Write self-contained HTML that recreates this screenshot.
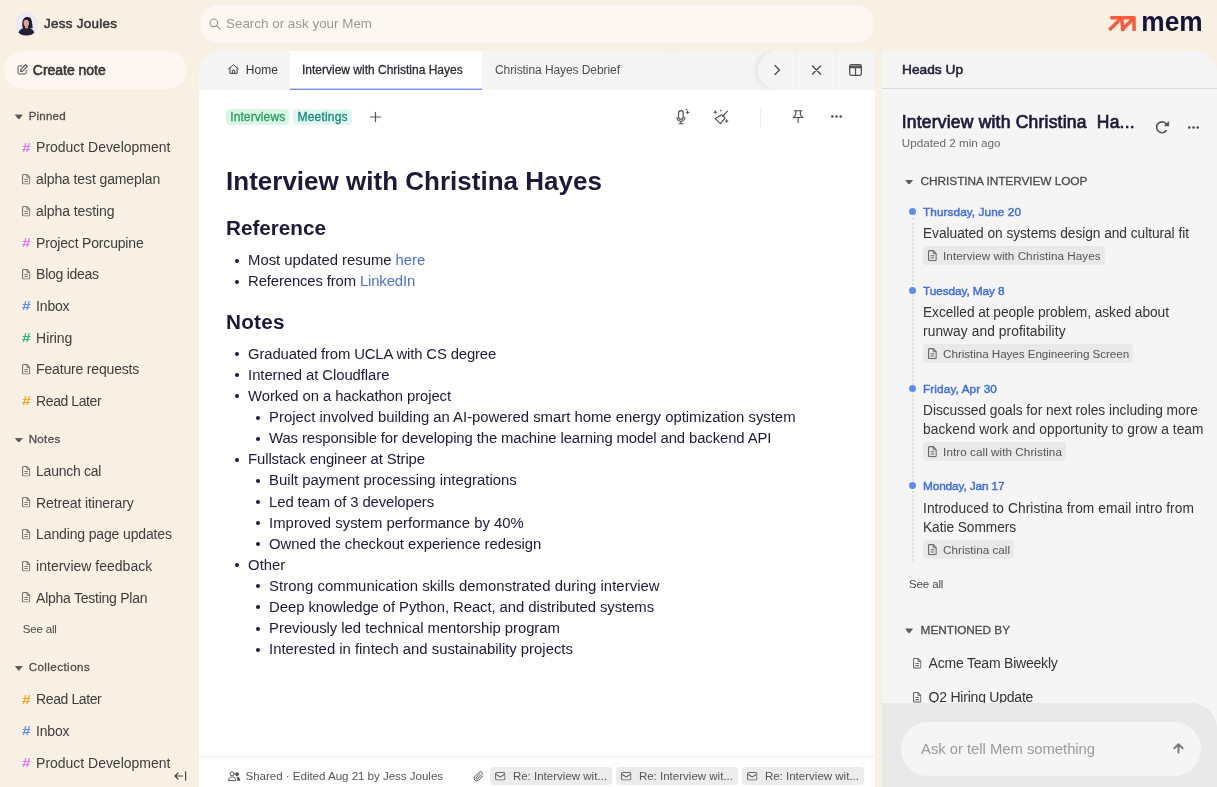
<!DOCTYPE html>
<html lang="en">
<head>
<meta charset="utf-8">
<title>Mem</title>
<style>
*{box-sizing:border-box;margin:0;padding:0}
html,body{width:1217px;height:787px;overflow:hidden}
body{background:#f9f0e4;font-family:"Liberation Sans",Arial,sans-serif;color:#3a3a3a;position:relative}
#app{position:absolute;left:0;top:0;width:1217px;height:787px;will-change:transform;opacity:.9999}
.abs,.t,.b{position:absolute}
.t{white-space:pre}
svg{display:block;overflow:visible;position:absolute}
.tri{position:absolute;width:7.6px;height:4.8px;background:#5c5c5c;clip-path:polygon(0 12%,6% 0,94% 0,100% 12%,56% 100%,44% 100%)}
.hash{position:absolute;font-size:12.5px;line-height:18px;font-weight:700;transform:scaleX(1.24);transform-origin:0 50%}
.pk{color:#dc7bf2}.bl{color:#5b8df0}.gr{color:#2fb58a}.or{color:#f6a623}
.med{-webkit-text-stroke:.28px currentColor}
.sb{-webkit-text-stroke:.55px currentColor}
.sb2{-webkit-text-stroke:.7px currentColor}
.sb3{-webkit-text-stroke:.45px currentColor}
.med2{-webkit-text-stroke:.28px currentColor}
.dot{position:absolute;width:7.4px;height:7.4px;border-radius:50%;background:#5b8df5}
.chip{position:absolute;border-radius:4px;background:#e9e9e9}
.bul{position:absolute;width:4px;height:4px;border-radius:50%;background:#1b1a38}
a{color:#4a72dc;text-decoration:none}
</style>
</head>
<body>
<div id="app">
<svg width="0" height="0" style="position:absolute"><defs>
<symbol id="doc" viewBox="0 0 9 11.500">
  <path d="M1.700.55h3.600L8.450 3.700v6.100a1.150 1.150 0 0 1-1.150 1.150H1.700A1.150 1.150 0 0 1 .55 9.800V1.700A1.150 1.150 0 0 1 1.700.55z" fill="none" stroke="currentColor" stroke-width="1.250"/>
  <path d="M2.600 5.900h3.800M2.600 8.200h3.800" stroke="currentColor" stroke-width="1.100" fill="none"/>
  <path d="M5.300.7v3h3" stroke="currentColor" stroke-width="1" fill="none"/>
</symbol>
<symbol id="env" viewBox="0 0 11 9"><rect x=".6" y=".6" width="9.800" height="7.800" rx="1.500" fill="none" stroke="currentColor" stroke-width="1.100"/><path d="M1 2.300l4.500 2.900L10 2.300" fill="none" stroke="currentColor" stroke-width="1.100" stroke-linejoin="round"/></symbol>
<symbol id="dots" viewBox="0 0 11 3"><circle cx="1.300" cy="1.500" r="1.250"/><circle cx="5.500" cy="1.500" r="1.250"/><circle cx="9.700" cy="1.500" r="1.250"/></symbol>
</defs></svg>
<!-- sidebar -->
<div class="abs" style="left:15px;top:12px;width:23px;height:23.500px;border-radius:50%;overflow:hidden;background:#ece9f3">
<svg width="23.500" height="24" viewBox="0 0 23.500 24"><rect width="23.500" height="24" fill="#ece9f3"/>
<path d="M7.900 16.200c-1-2.800-1-7.600 1.300-9.900 1.600-1.600 4.600-1.900 6.200-.2 1.700 1.900 1.900 6.500 2.300 10.200z" fill="#1f1c2b"/>
<ellipse cx="11.300" cy="11" rx="2.700" ry="3.600" fill="#dba39a" transform="rotate(-8 11.300 11)"/>
<path d="M8.400 10.300c.3-2 1.900-3.300 3.900-2.600 1.100.4 1.900 1.400 2.200 3.300.5-2.900-.6-5.300-3-5.500-2.300-.2-3.600 2-3.100 4.800z" fill="#1f1c2b"/>
<path d="M10.200 13.600h2.800l.3 3.200h-3.500z" fill="#d79c90"/>
<path d="M3 22.700c.2-3.600 2.300-5.900 6.400-6.900l1.900.7 2.700-.7c3.400.9 5.200 3 5.400 6.100-4 1.800-12 2-16.400.8z" fill="#252238"/>
</svg></div>
<div class="t sb" style="left:44px;top:16px;font-size:13.4px;line-height:16px;color:#383838;letter-spacing:0.303px;">Jess Joules</div>
<div class="abs" style="left:4px;top:51px;width:183px;height:38px;border-radius:19px;background:#fcf7f1"></div>
<svg style="left:17px;top:64px" width="11" height="11" viewBox="0 0 11 11" fill="none" stroke="#555" stroke-width="1" stroke-linecap="round" stroke-linejoin="round">
<path d="M4.800 1.900H2.100A1.100 1.100 0 0 0 1 3v5.900A1.100 1.100 0 0 0 2.100 10h5.900A1.100 1.100 0 0 0 9.100 8.900V6.300"/><path d="M8.600.7l1.700 1.700-4.700 4.700-2.100.4.400-2.100z" stroke-width="1.150"/></svg>
<div class="t sb" style="left:32.8px;top:62px;font-size:14px;line-height:16px;color:#333;letter-spacing:-0.027px;">Create note</div>
<i class="tri" style="left:15px;top:114.4px"></i><div class="t med2" style="left:28.7px;top:108.7px;font-size:11.6px;line-height:14px;color:#4c4c4c;letter-spacing:0.178px;">Pinned</div>
<b class="hash pk" style="left:22.200px;top:138.5px">#</b><div class="t" style="left:36.1px;top:138.4px;font-size:14px;line-height:18px;color:#3d3d3d;letter-spacing:-0.024px;">Product Development</div>
<svg style="left:22px;top:173.8px;color:#747474" width="8.300" height="10.500"><use href="#doc"/></svg><div class="t" style="left:36.1px;top:170.1px;font-size:14px;line-height:18px;color:#3d3d3d;letter-spacing:-0.111px;">alpha test gameplan</div>
<svg style="left:22px;top:205.5px;color:#747474" width="8.300" height="10.500"><use href="#doc"/></svg><div class="t" style="left:36.1px;top:201.79999999999998px;font-size:14px;line-height:18px;color:#3d3d3d;letter-spacing:-0.084px;">alpha testing</div>
<b class="hash pk" style="left:22.200px;top:233.8px">#</b><div class="t" style="left:36.1px;top:233.7px;font-size:14px;line-height:18px;color:#3d3d3d;letter-spacing:-0.182px;">Project Porcupine</div>
<svg style="left:22px;top:268.9px;color:#747474" width="8.300" height="10.500"><use href="#doc"/></svg><div class="t" style="left:36.1px;top:265.20000000000005px;font-size:14px;line-height:18px;color:#3d3d3d;letter-spacing:-0.266px;">Blog ideas</div>
<b class="hash bl" style="left:22.200px;top:297.1px">#</b><div class="t" style="left:36.1px;top:297.0px;font-size:14px;line-height:18px;color:#3d3d3d;letter-spacing:-0.188px;">Inbox</div>
<b class="hash gr" style="left:22.200px;top:328.8px">#</b><div class="t" style="left:36.1px;top:328.70000000000005px;font-size:14px;line-height:18px;color:#3d3d3d;letter-spacing:-0.056px;">Hiring</div>
<svg style="left:22px;top:364.0px;color:#747474" width="8.300" height="10.500"><use href="#doc"/></svg><div class="t" style="left:36.1px;top:360.3px;font-size:14px;line-height:18px;color:#3d3d3d;letter-spacing:-0.176px;">Feature requests</div>
<b class="hash or" style="left:22.200px;top:392.2px">#</b><div class="t" style="left:36.1px;top:392.1px;font-size:14px;line-height:18px;color:#3d3d3d;letter-spacing:-0.420px;">Read Later</div>
<i class="tri" style="left:15px;top:437.7px"></i><div class="t med2" style="left:28.7px;top:432.0px;font-size:11.6px;line-height:14px;color:#4c4c4c;letter-spacing:0.301px;">Notes</div>
<svg style="left:22px;top:465.8px;color:#747474" width="8.300" height="10.500"><use href="#doc"/></svg><div class="t" style="left:36.1px;top:462.1px;font-size:14px;line-height:18px;color:#3d3d3d;letter-spacing:-0.269px;">Launch cal</div>
<svg style="left:22px;top:497.4px;color:#747474" width="8.300" height="10.500"><use href="#doc"/></svg><div class="t" style="left:36.1px;top:493.70000000000005px;font-size:14px;line-height:18px;color:#3d3d3d;letter-spacing:-0.118px;">Retreat itinerary</div>
<svg style="left:22px;top:529.1px;color:#747474" width="8.300" height="10.500"><use href="#doc"/></svg><div class="t" style="left:36.1px;top:525.4px;font-size:14px;line-height:18px;color:#3d3d3d;letter-spacing:-0.141px;">Landing page updates</div>
<svg style="left:22px;top:560.8px;color:#747474" width="8.300" height="10.500"><use href="#doc"/></svg><div class="t" style="left:36.1px;top:557.1px;font-size:14px;line-height:18px;color:#3d3d3d;letter-spacing:0.009px;">interview feedback</div>
<svg style="left:22px;top:592.3px;color:#747474" width="8.300" height="10.500"><use href="#doc"/></svg><div class="t" style="left:36.1px;top:588.6px;font-size:14px;line-height:18px;color:#3d3d3d;letter-spacing:-0.254px;">Alpha Testing Plan</div>
<div class="t" style="left:22.8px;top:622px;font-size:11.5px;line-height:14px;color:#4a4a4a;letter-spacing:-0.179px;">See all</div>
<i class="tri" style="left:15px;top:665.8px"></i><div class="t med2" style="left:28.7px;top:660.1px;font-size:11.6px;line-height:14px;color:#4c4c4c;letter-spacing:0.428px;">Collections</div>
<b class="hash or" style="left:22.200px;top:690.5px">#</b><div class="t" style="left:36.1px;top:690.4px;font-size:14px;line-height:18px;color:#3d3d3d;letter-spacing:-0.409px;">Read Later</div>
<b class="hash bl" style="left:22.200px;top:722.2px">#</b><div class="t" style="left:36.1px;top:722.1px;font-size:14px;line-height:18px;color:#3d3d3d;letter-spacing:-0.213px;">Inbox</div>
<b class="hash pk" style="left:22.200px;top:753.8px">#</b><div class="t" style="left:36.1px;top:753.7px;font-size:14px;line-height:18px;color:#3d3d3d;letter-spacing:-0.024px;">Product Development</div>
<svg style="left:174px;top:771px" width="13" height="10" viewBox="0 0 13 10" fill="none" stroke="#444" stroke-width="1.200" stroke-linecap="round" stroke-linejoin="round"><path d="M1 5h7.600M4 2L1 5l3 3M11.600.8v8.400"/></svg>
<!-- search -->
<div class="abs" style="left:200px;top:5px;width:674px;height:38px;border-radius:19px;background:#fcf7f1"></div>
<svg style="left:209px;top:18px" width="12" height="12" viewBox="0 0 12 12" fill="none" stroke="#96928e" stroke-width="1.100" stroke-linecap="round"><circle cx="4.800" cy="4.800" r="3.800"/><path d="M7.700 7.700l3.300 3.300"/></svg>
<div class="t" style="left:226px;top:16px;font-size:13.4px;line-height:16px;color:#9c9893;letter-spacing:0.007px;">Search or ask your Mem</div>
<!-- center panel -->
<div class="abs" style="left:199px;top:51px;width:676px;height:736px;background:#fff;border-top-left-radius:22px;overflow:hidden">
  <div class="abs" style="left:0;top:0;width:676px;height:38px;background:#f5f5f5"></div>
  <div class="abs" style="left:0;top:38px;width:676px;height:1px;background:#f9f2e8"></div>
  <div class="abs" style="left:91px;top:0;width:192px;height:37px;background:#fff"></div>
  <div class="abs" style="left:91px;top:37px;width:192px;height:1px;background:#c3d1fa"></div>
  <div class="abs" style="left:91px;top:38px;width:192px;height:1px;background:#7393f2"></div>
  <div class="abs" style="left:472px;top:0;width:1px;height:38px;background:#f7f1ea"></div>
  <div class="abs" style="left:476px;top:0;width:1px;height:38px;background:#f6efe7"></div>
  <div class="abs" style="left:540px;top:0;width:136px;height:38px;overflow:hidden"><div class="abs" style="left:19px;top:0;width:117px;height:38px;background:#f5f5f5;border-radius:19px 0 0 19px;box-shadow:-3px 0 6px rgba(0,0,0,.08)"></div></div>
  <div class="abs" style="left:597px;top:0;width:1px;height:38px;background:#f4eee6"></div>
  <div class="abs" style="left:636px;top:0;width:1px;height:38px;background:#f4eee6"></div>
  <div class="abs" style="left:0;top:705px;width:676px;height:1px;background:#f8f0e6"></div>
</div>
<svg style="left:228.200px;top:63.800px" width="11" height="10.200" viewBox="0 0 11 10" fill="none" stroke="#444" stroke-width="1" stroke-linejoin="round" stroke-linecap="round"><path d="M.7 4.700L5.500.7l4.800 4M1.900 4v5.300h7.200V4"/><path d="M4.300 9.200V6.200h2.400v3"/></svg>
<div class="t" style="left:245.8px;top:62px;font-size:12px;line-height:16px;color:#333;letter-spacing:0.061px;">Home</div>
<div class="t med" style="left:302px;top:62px;font-size:12px;line-height:16px;color:#2b2b33;letter-spacing:-0.001px;">Interview with Christina Hayes</div>
<div class="t" style="left:495px;top:62px;font-size:12px;line-height:16px;color:#4e4e4e;letter-spacing:-0.078px;">Christina Hayes Debrief</div>
<svg style="left:0;top:0" width="1217" height="787" viewBox="0 0 1217 787" fill="none" stroke="#484848" stroke-width="1.250" stroke-linecap="round" stroke-linejoin="round"><path d="M775 65.500l4.400 4.500-4.400 4.500"/><path d="M812.500 66l8 8M820.500 66l-8 8"/></svg>
<svg style="left:849px;top:64px" width="13" height="12" viewBox="0 0 13 12" fill="none" stroke="#505050" stroke-width="1.300" stroke-linejoin="round"><rect x=".7" y=".7" width="11.600" height="10.600" rx="1.500"/><path d="M.7 2.200h11.600v1.500H.7z" fill="#505050"/><path d="M6.500 3.600v7.700"/></svg>
<div class="abs" style="left:226px;top:109.300px;width:63px;height:15.400px;border-radius:4px;background:#daf7e6"></div>
<div class="abs" style="left:293px;top:109.300px;width:58.500px;height:15.400px;border-radius:4px;background:#e0f7f3"></div>
<div class="t med" style="left:230.2px;top:109px;font-size:12px;line-height:16px;color:#229d59;letter-spacing:0.108px;">Interviews</div>
<div class="t med" style="left:297.5px;top:109px;font-size:12px;line-height:16px;color:#148a78;letter-spacing:0.185px;">Meetings</div>
<svg style="left:369.500px;top:111.500px" width="11" height="10" viewBox="0 0 11 10" stroke="#555" stroke-width="1.200" stroke-linecap="round"><path d="M5.500.4v9.200M.5 5h10"/></svg>
<svg style="left:0;top:0" width="1217" height="787" viewBox="0 0 1217 787" fill="none" stroke="#484848" stroke-width="1.100" stroke-linecap="round" stroke-linejoin="round">
  <!-- mic -->
  <rect x="678.600" y="110.600" width="4.600" height="8.600" rx="2.300"/>
  <path d="M676.900 117.300a4 4 0 0 0 8 0M680.900 121.400v2.300M678.900 123.800h4"/>
  <path d="M687.600 110l.6 1.700 1.700.6-1.700.6-.6 1.700-.6-1.700-1.700-.6 1.700-.6z" fill="#484848" stroke="none"/>
  <path d="M686.300 108.300l.35.9.9.35-.9.35-.35.9-.35-.9-.9-.35.9-.35z" fill="#484848" stroke="none"/>
  <!-- broom -->
  <path d="M727.500 111.200l-4.300 4.700"/>
  <path d="M721.800 114.800l3.400 3-4.800 5.900-5.300-5.300z"/>
  <circle cx="723.300" cy="116" r="1.100" fill="#484848" stroke="none"/>
  <path d="M715.300 109.900l.6 1.700 1.700.6-1.700.6-.6 1.700-.6-1.700-1.700-.6 1.700-.6z" fill="#484848" stroke="none"/>
  <path d="M720.900 109.200l.4 1 1 .4-1 .4-.4 1-.4-1-1-.4 1-.4z" fill="#484848" stroke="none"/>
  <path d="M726.700 118.900l.6 1.600 1.600.6-1.600.6-.6 1.600-.6-1.600-1.600-.6 1.600-.6z" fill="#484848" stroke="none"/>
  <!-- pin -->
  <path d="M794.300 110.700h7.600M795.800 110.700v4.100l-2.500 2.700h9.600l-2.500-2.700v-4.100M798.100 117.600v4.900"/>
</svg>
<div class="abs" style="left:760px;top:107px;width:1px;height:20px;background:#ececec"></div>
<svg style="left:830.800px;top:114.900px" width="11" height="3" fill="#484848"><use href="#dots"/></svg>
<div class="t" style="left:226px;top:164px;font-size:26px;line-height:34px;font-weight:700;color:#1b1a38;letter-spacing:0.011px;">Interview with Christina Hayes</div>
<div class="t" style="left:226px;top:214.5px;font-size:20.7px;line-height:26px;font-weight:700;color:#1b1a38;letter-spacing:-0.006px;">Reference</div>
<div class="t" style="left:226px;top:308.5px;font-size:20.7px;line-height:26px;font-weight:700;color:#1b1a38;letter-spacing:0.254px;">Notes</div>
<i class="bul" style="left:235.1px;top:258.5px"></i><div class="t" style="left:248.1px;top:250.1px;font-size:14.86px;line-height:21px;color:#1b1a38;letter-spacing:-0.017px;">Most updated resume <a>here</a></div>
<i class="bul" style="left:235.1px;top:279.5px"></i><div class="t" style="left:248.1px;top:271.09999999999997px;font-size:14.86px;line-height:21px;color:#1b1a38;letter-spacing:-0.133px;">References from <a>LinkedIn</a></div>
<i class="bul" style="left:235.1px;top:352.2px"></i><div class="t" style="left:248.1px;top:343.79999999999995px;font-size:14.86px;line-height:21px;color:#1b1a38;letter-spacing:-0.140px;">Graduated from UCLA with CS degree</div>
<i class="bul" style="left:235.1px;top:373.3px"></i><div class="t" style="left:248.1px;top:364.9px;font-size:14.86px;line-height:21px;color:#1b1a38;letter-spacing:-0.076px;">Interned at Cloudflare</div>
<i class="bul" style="left:235.1px;top:394.4px"></i><div class="t" style="left:248.1px;top:385.99999999999994px;font-size:14.86px;line-height:21px;color:#1b1a38;letter-spacing:-0.086px;">Worked on a hackathon project</div>
<i class="bul" style="left:256.1px;top:415.5px"></i><div class="t" style="left:269.1px;top:407.09999999999997px;font-size:14.86px;line-height:21px;color:#1b1a38;letter-spacing:-0.007px;">Project involved building an AI-powered smart home energy optimization system</div>
<i class="bul" style="left:256.1px;top:436.6px"></i><div class="t" style="left:269.1px;top:428.19999999999993px;font-size:14.86px;line-height:21px;color:#1b1a38;letter-spacing:-0.106px;">Was responsible for developing the machine learning model and backend API</div>
<i class="bul" style="left:235.1px;top:457.7px"></i><div class="t" style="left:248.1px;top:449.29999999999995px;font-size:14.86px;line-height:21px;color:#1b1a38;letter-spacing:-0.117px;">Fullstack engineer at Stripe</div>
<i class="bul" style="left:256.1px;top:478.8px"></i><div class="t" style="left:269.1px;top:470.4px;font-size:14.86px;line-height:21px;color:#1b1a38;letter-spacing:0.020px;">Built payment processing integrations</div>
<i class="bul" style="left:256.1px;top:499.9px"></i><div class="t" style="left:269.1px;top:491.5px;font-size:14.86px;line-height:21px;color:#1b1a38;letter-spacing:-0.118px;">Led team of 3 developers</div>
<i class="bul" style="left:256.1px;top:521.0px"></i><div class="t" style="left:269.1px;top:512.6px;font-size:14.86px;line-height:21px;color:#1b1a38;letter-spacing:0.010px;">Improved system performance by 40%</div>
<i class="bul" style="left:256.1px;top:542.1px"></i><div class="t" style="left:269.1px;top:533.6999999999999px;font-size:14.86px;line-height:21px;color:#1b1a38;letter-spacing:-0.033px;">Owned the checkout experience redesign</div>
<i class="bul" style="left:235.1px;top:563.2px"></i><div class="t" style="left:248.1px;top:554.8px;font-size:14.86px;line-height:21px;color:#1b1a38;letter-spacing:-0.018px;">Other</div>
<i class="bul" style="left:256.1px;top:584.3px"></i><div class="t" style="left:269.1px;top:575.9px;font-size:14.86px;line-height:21px;color:#1b1a38;letter-spacing:0.056px;">Strong communication skills demonstrated during interview</div>
<i class="bul" style="left:256.1px;top:605.4px"></i><div class="t" style="left:269.1px;top:597.0px;font-size:14.86px;line-height:21px;color:#1b1a38;letter-spacing:-0.074px;">Deep knowledge of Python, React, and distributed systems</div>
<i class="bul" style="left:256.1px;top:626.5px"></i><div class="t" style="left:269.1px;top:618.1px;font-size:14.86px;line-height:21px;color:#1b1a38;letter-spacing:-0.038px;">Previously led technical mentorship program</div>
<i class="bul" style="left:256.1px;top:647.6px"></i><div class="t" style="left:269.1px;top:639.1999999999999px;font-size:14.86px;line-height:21px;color:#1b1a38;letter-spacing:-0.004px;">Interested in fintech and sustainability projects</div>
<svg style="left:228px;top:770.800px" width="12.300" height="9.800" viewBox="0 0 12.500 10" fill="none" stroke="#555" stroke-width="1" stroke-linecap="round" stroke-linejoin="round"><circle cx="4.200" cy="2.800" r="2"/><path d="M.6 9.400c0-2.200 1.500-3.300 3.600-3.300s3.600 1.100 3.600 3.300z"/><circle cx="9.200" cy="3.300" r="1.500" fill="#555"/><path d="M9 6.300c1.900 0 3 1 3 3.100H9.600" fill="#555"/></svg>
<div class="t" style="left:245.5px;top:768.6px;font-size:11.6px;line-height:14px;color:#555;letter-spacing:-0.043px;">Shared · Edited Aug 21 by Jess Joules</div>
<svg style="left:473.300px;top:770.500px" width="11" height="11" viewBox="0 0 11 11" fill="none" stroke="#555" stroke-width="1" stroke-linecap="round" stroke-linejoin="round"><path d="M9.800 5L5.600 9.200a2.600 2.600 0 0 1-3.700-3.700l4.400-4.400a1.750 1.750 0 0 1 2.500 2.500L4.500 7.900a.9.900 0 0 1-1.300-1.300l3.900-3.900"/></svg>
<div class="chip" style="left:490px;top:766.500px;width:121.500px;height:18.500px;background:#ececec"></div><svg style="left:495px;top:771.500px;color:#6a6a6a" width="10.500" height="8.600"><use href="#env"/></svg><div class="t" style="left:512.9px;top:769px;font-size:11.5px;line-height:14px;color:#555;letter-spacing:0.008px;">Re: Interview wit...</div>
<div class="chip" style="left:616px;top:766.500px;width:121.500px;height:18.500px;background:#ececec"></div><svg style="left:621px;top:771.500px;color:#6a6a6a" width="10.500" height="8.600"><use href="#env"/></svg><div class="t" style="left:638.9px;top:769px;font-size:11.5px;line-height:14px;color:#555;letter-spacing:0.008px;">Re: Interview wit...</div>
<div class="chip" style="left:742px;top:766.500px;width:121.500px;height:18.500px;background:#ececec"></div><svg style="left:747px;top:771.500px;color:#6a6a6a" width="10.500" height="8.600"><use href="#env"/></svg><div class="t" style="left:764.9px;top:769px;font-size:11.5px;line-height:14px;color:#555;letter-spacing:0.008px;">Re: Interview wit...</div>
<svg style="left:1100px;top:8px" width="110" height="32" viewBox="1100 8 110 32">
  <g fill="none" stroke="#fb5a3c" stroke-width="3.500" stroke-linejoin="round" stroke-linecap="butt">
    <path d="M1110.300 17.700h11.300l1.300 13.400"/><path d="M1121.200 18.200l-11.800 11.700"/>
    <path d="M1123 17.700h11l.1 13.400"/><path d="M1133.600 18.200l-11.800 11.700"/>
  </g>
  <text x="1141.300" y="31.100" font-family="Liberation Sans, Arial, sans-serif" font-weight="700" font-size="27" fill="#15143a" textLength="61.300" lengthAdjust="spacingAndGlyphs">mem</text>
</svg>
<!-- right -->
<div class="abs" style="left:882px;top:50.700px;width:335px;height:737px;background:#f5f5f5;border-top-right-radius:22px;overflow:hidden">
  <div class="abs" style="left:0;top:37.800px;width:335px;height:1px;background:#dcdcdc"></div>
  <div class="abs" style="left:0;top:652.300px;width:335px;height:90px;background:#e9e9e9;border-top-right-radius:26px"></div>
  <div class="abs" style="left:18.900px;top:671.600px;width:299.400px;height:53.500px;border-radius:27px;background:#f5f5f5"></div>
</div>
<div class="t sb" style="left:902px;top:62px;font-size:13.7px;line-height:16px;color:#222136;letter-spacing:0.018px;">Heads Up</div>
<div class="t sb2" style="left:901.7px;top:111.2px;font-size:17.5px;line-height:22px;color:#1b1a38;letter-spacing:0.210px;">Interview with Christina  Ha...</div>
<svg style="left:0;top:0" width="1217" height="787" viewBox="0 0 1217 787"><path d="M1166.500 124.200A5.400 5.400 0 1 0 1166.400 130.500" fill="none" stroke="#4f4f4f" stroke-width="1.550" stroke-linecap="round"/><path d="M1168.800 121.600v4.500l-4.500-.3z" fill="#4f4f4f" stroke="#4f4f4f" stroke-width=".5" stroke-linejoin="round"/></svg>
<svg style="left:1188px;top:125.700px" width="11" height="3" fill="#444"><use href="#dots"/></svg>
<div class="t" style="left:901.7px;top:136px;font-size:11.7px;line-height:14px;color:#6a6a6a;letter-spacing:0.002px;">Updated 2 min ago</div>
<i class="tri" style="left:905.300px;top:179.7px"></i><div class="t med" style="left:920.6px;top:174.3px;font-size:11.83px;line-height:14px;color:#4a4a4a;letter-spacing:-0.054px;">CHRISTINA INTERVIEW LOOP</div>
<div class="abs" style="left:912px;top:218px;width:0;height:343px;border-left:2px dotted #e0e0e0"></div>
<i class="dot" style="left:909.100px;top:207.9px"></i><div class="t sb3" style="left:923px;top:204.79999999999998px;font-size:11.8px;line-height:14px;color:#3f6fe0;letter-spacing:0.072px;">Thursday, June 20</div>
<div class="t" style="left:923px;top:223.9px;font-size:13.74px;line-height:19px;color:#333;letter-spacing:-0.046px;">Evaluated on systems design and cultural fit</div>
<div class="chip" style="left:923px;top:246.2px;width:181.7px;height:19px"></div><svg style="left:928.400px;top:250.1px;color:#6a6a6a" width="8.800" height="11.300"><use href="#doc"/></svg><div class="t" style="left:943.1px;top:248.9px;font-size:11.7px;line-height:14px;color:#555;letter-spacing:0.033px;">Interview with Christina Hayes</div>
<i class="dot" style="left:909.100px;top:286.9px"></i><div class="t sb3" style="left:923px;top:283.8px;font-size:11.8px;line-height:14px;color:#3f6fe0;letter-spacing:-0.079px;">Tuesday, May 8</div>
<div class="t" style="left:923px;top:303.2px;font-size:13.74px;line-height:19px;color:#333;letter-spacing:-0.057px;">Excelled at people problem, asked about</div>
<div class="t" style="left:923px;top:322.09999999999997px;font-size:13.74px;line-height:19px;color:#333;letter-spacing:0.088px;">runway and profitability</div>
<div class="chip" style="left:923px;top:343.8px;width:210.3px;height:19px"></div><svg style="left:928.400px;top:347.7px;color:#6a6a6a" width="8.800" height="11.300"><use href="#doc"/></svg><div class="t" style="left:943.1px;top:346.5px;font-size:11.7px;line-height:14px;color:#555;letter-spacing:-0.070px;">Christina Hayes Engineering Screen</div>
<i class="dot" style="left:909.100px;top:384.6px"></i><div class="t sb3" style="left:923px;top:381.5px;font-size:11.8px;line-height:14px;color:#3f6fe0;letter-spacing:0.103px;">Friday, Apr 30</div>
<div class="t" style="left:923px;top:400.79999999999995px;font-size:13.74px;line-height:19px;color:#333;letter-spacing:-0.035px;">Discussed goals for next roles including more</div>
<div class="t" style="left:923px;top:420.0px;font-size:13.74px;line-height:19px;color:#333;letter-spacing:0.062px;">backend work and opportunity to grow a team</div>
<div class="chip" style="left:923px;top:441.9px;width:143.0px;height:19px"></div><svg style="left:928.400px;top:445.8px;color:#6a6a6a" width="8.800" height="11.300"><use href="#doc"/></svg><div class="t" style="left:943.1px;top:444.59999999999997px;font-size:11.7px;line-height:14px;color:#555;letter-spacing:0.051px;">Intro call with Christina</div>
<i class="dot" style="left:909.100px;top:482.1px"></i><div class="t sb3" style="left:923px;top:479.0px;font-size:11.8px;line-height:14px;color:#3f6fe0;letter-spacing:-0.114px;">Monday, Jan 17</div>
<div class="t" style="left:923px;top:498.5px;font-size:13.74px;line-height:19px;color:#333;letter-spacing:0.068px;">Introduced to Christina from email intro from</div>
<div class="t" style="left:923px;top:517.6px;font-size:13.74px;line-height:19px;color:#333;letter-spacing:-0.066px;">Katie Sommers</div>
<div class="chip" style="left:923px;top:539.9px;width:91.4px;height:19px"></div><svg style="left:928.400px;top:543.8px;color:#6a6a6a" width="8.800" height="11.300"><use href="#doc"/></svg><div class="t" style="left:943.1px;top:542.6px;font-size:11.7px;line-height:14px;color:#555;letter-spacing:-0.000px;">Christina call</div>
<div class="t" style="left:909px;top:577px;font-size:11.5px;line-height:14px;color:#4a4a4a;letter-spacing:-0.129px;">See all</div>
<i class="tri" style="left:905.300px;top:628.4px"></i><div class="t med" style="left:920.6px;top:623px;font-size:11.83px;line-height:14px;color:#4a4a4a;letter-spacing:-0.050px;">MENTIONED BY</div>
<svg style="left:912.600px;top:657.8px;color:#6a6a6a" width="8.400" height="10.700"><use href="#doc"/></svg><div class="t" style="left:928.6px;top:653.6px;font-size:14px;line-height:18px;color:#333;letter-spacing:-0.212px;">Acme Team Biweekly</div>
<svg style="left:912.600px;top:691.8px;color:#6a6a6a" width="8.400" height="10.700"><use href="#doc"/></svg><div class="t" style="left:928.6px;top:687.6px;font-size:14px;line-height:18px;color:#333;letter-spacing:-0.225px;">Q2 Hiring Update</div>
<div class="abs" style="left:882px;top:703px;width:335px;height:84px;background:#e9e9e9;border-top-right-radius:26px"></div>
<div class="abs" style="left:901.400px;top:722.300px;width:299.400px;height:53.500px;border-radius:27px;background:#f5f5f5"></div>
<div class="t" style="left:921.1px;top:740px;font-size:14.85px;line-height:18px;color:#9b9b9b;letter-spacing:-0.037px;">Ask or tell Mem something</div>
<svg style="left:1172.500px;top:743.300px" width="11" height="10.600" viewBox="0 0 11 10.600" fill="none" stroke="#7a7a7a" stroke-width="1.900" stroke-linecap="round" stroke-linejoin="round"><path d="M5.500 9.600V1.400M1.300 5.300l4.200-4.100 4.200 4.100"/></svg>
</div>
</body>
</html>
